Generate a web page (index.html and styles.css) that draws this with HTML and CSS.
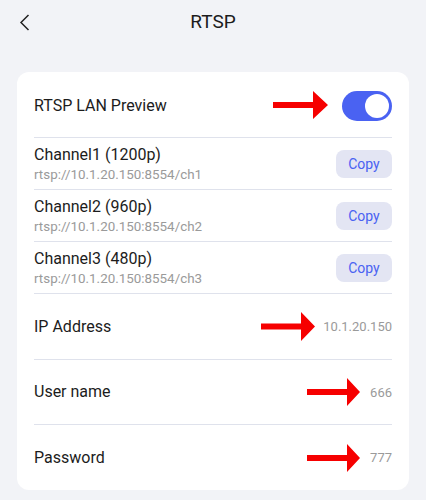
FILE: index.html
```html
<!DOCTYPE html>
<html>
<head>
<meta charset="utf-8">
<link rel="stylesheet" href="styles.css">
</head>
<body>
<header class="topbar">
  <div class="back">
    <svg width="11" height="17" viewBox="0 0 11 17"><polyline points="9.5,1 2,8.5 9.5,16" fill="none" stroke="#222" stroke-width="1.5"/></svg>
  </div>
  <h1 class="title">RTSP</h1>
  <div></div>
</header>

<section class="card">
  <div class="row first">
    <span class="label">RTSP LAN Preview</span>
    <div class="right">
      <svg class="arrow a-toggle" width="55" height="28" viewBox="0 0 55 28"><polygon points="0,11 40,11 40,0 55,14 40,28 40,17 0,17" fill="#f60000"/></svg>
      <div class="toggle"><div class="knob"></div></div>
    </div>
  </div>

  <div class="row channel">
    <div class="ch-text">
      <div class="ch-title">Channel1 (1200p)</div>
      <div class="ch-url">rtsp://10.1.20.150:8554/ch1</div>
    </div>
    <button class="copy">Copy</button>
  </div>
  <div class="row channel">
    <div class="ch-text">
      <div class="ch-title">Channel2 (960p)</div>
      <div class="ch-url">rtsp://10.1.20.150:8554/ch2</div>
    </div>
    <button class="copy">Copy</button>
  </div>
  <div class="row channel">
    <div class="ch-text">
      <div class="ch-title">Channel3 (480p)</div>
      <div class="ch-url">rtsp://10.1.20.150:8554/ch3</div>
    </div>
    <button class="copy">Copy</button>
  </div>

  <div class="row tall">
    <span class="label">IP Address</span>
    <div class="right">
      <svg class="arrow a-ip" width="54" height="29" viewBox="0 0 54 29"><polygon points="0,11.5 40,11.5 40,0 54,14.5 40,29 40,17.5 0,17.5" fill="#f60000"/></svg>
      <span class="value">10.1.20.150</span>
    </div>
  </div>
  <div class="row tall user">
    <span class="label">User name</span>
    <div class="right">
      <svg class="arrow a-val" width="53" height="28" viewBox="0 0 53 28"><polygon points="0,11 40,11 40,0 53,14 40,28 40,17 0,17" fill="#f60000"/></svg>
      <span class="value">666</span>
    </div>
  </div>
  <div class="row tall">
    <span class="label">Password</span>
    <div class="right">
      <svg class="arrow a-val" width="53" height="28" viewBox="0 0 53 28"><polygon points="0,11 40,11 40,0 53,14 40,28 40,17 0,17" fill="#f60000"/></svg>
      <span class="value">777</span>
    </div>
  </div>
</section>
</body>
</html>
```
FILE: styles.css
```css
* { box-sizing: border-box; }
html, body {
  margin: 0;
  padding: 0;
  background: #f2f3f7;
  font-family: Roboto, "Noto Sans", sans-serif;
  color: #1c1c1c;
}
.topbar {
  height: 44px;
  display: grid;
  grid-template-columns: 1fr auto 1fr;
  align-items: center;
}
.back {
  padding-left: 19px;
  display: flex;
  align-items: center;
  padding-top: 1px;
}
.title {
  margin: 0;
  font-size: 19px;
  font-weight: 400;
  line-height: 24px;
}
.card {
  margin: 28px 17px 0;
  background: #fff;
  border-radius: 12px;
  padding: 0 17px;
}
.row {
  display: flex;
  align-items: center;
  justify-content: space-between;
  border-top: 1px solid #dfe2ec;
}
.row.first {
  border-top: none;
  height: 65px;
  padding-top: 3px;
}
.tall { height: 66px; }
.row.user { height: 65px; }
.channel { height: 52px; }
.label {
  font-size: 16px;
  line-height: 20px;
}
.right {
  display: flex;
  align-items: center;
}
.arrow { display: block; }
.a-toggle { margin-right: 14px; margin-top: -2px; }
.a-ip { margin-right: 8px; }
.a-val { margin-right: 10px; }
.toggle {
  width: 50px;
  height: 30px;
  border-radius: 15px;
  background: #4a62f2;
  position: relative;
}
.knob {
  position: absolute;
  right: 3px;
  top: 3px;
  width: 24px;
  height: 24px;
  border-radius: 50%;
  background: #fff;
}
.ch-text {
  display: flex;
  flex-direction: column;
}
.ch-title {
  font-size: 16px;
  line-height: 20px;
}
.ch-url {
  font-size: 13.4px;
  line-height: 17px;
  color: #9a9a9a;
  margin-top: 1px;
}
.copy {
  width: 56px;
  height: 28px;
  border: none;
  border-radius: 8px;
  background: #e3e5f3;
  color: #4a62f2;
  font-family: Roboto, "Noto Sans", sans-serif;
  font-size: 14px;
  padding: 0;
}
.value {
  font-size: 13px;
  color: #9a9a9a;
}
```
